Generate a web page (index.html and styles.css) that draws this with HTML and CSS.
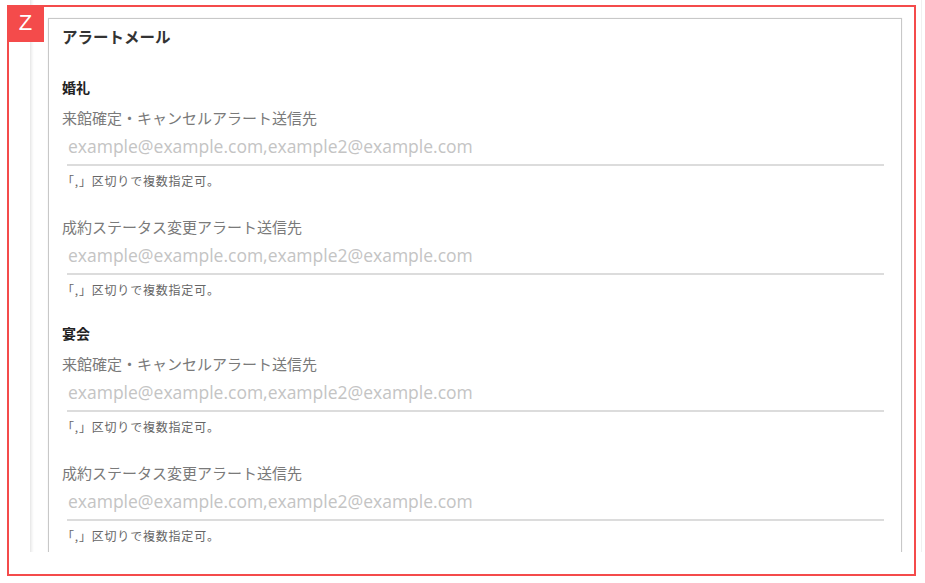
FILE: index.html
```html
<!DOCTYPE html>
<html lang="ja">
<head>
    <meta charset="UTF-8">
    <meta name="viewport" content="width=device-width, initial-scale=1.0">
    <title>アラートメール</title>
    <link rel="stylesheet" href="styles.css">
</head>
<body>
    <div class="frame">
        <div class="panel">
            <div class="card">
                <h2 class="card-title">アラートメール</h2>

                <div class="section">
                    <h3 class="section-title">婚礼</h3>
                    <div class="field">
                        <label for="weddingVisit">来館確定・キャンセルアラート送信先</label>
                        <input type="text" id="weddingVisit" placeholder="example@example.com,example2@example.com" />
                        <small class="hint">「,」区切りで複数指定可。</small>
                    </div>
                    <div class="field">
                        <label for="weddingStatus">成約ステータス変更アラート送信先</label>
                        <input type="text" id="weddingStatus" placeholder="example@example.com,example2@example.com" />
                        <small class="hint">「,」区切りで複数指定可。</small>
                    </div>
                </div>

                <div class="section">
                    <h3 class="section-title">宴会</h3>
                    <div class="field">
                        <label for="banquetVisit">来館確定・キャンセルアラート送信先</label>
                        <input type="text" id="banquetVisit" placeholder="example@example.com,example2@example.com" />
                        <small class="hint">「,」区切りで複数指定可。</small>
                    </div>
                    <div class="field">
                        <label for="banquetStatus">成約ステータス変更アラート送信先</label>
                        <input type="text" id="banquetStatus" placeholder="example@example.com,example2@example.com" />
                        <small class="hint">「,」区切りで複数指定可。</small>
                    </div>
                </div>
            </div>
        </div>
    </div>

    <div class="highlight"></div>
    <div class="badge">Z</div>
</body>
</html>
```

FILE: styles.css
```css
body {
  margin: 0;
  background: #fff;
  font-family: "Noto Sans CJK JP", "Noto Sans", sans-serif;
}

.frame {
  height: 552px;
  overflow: hidden;
}

.panel {
  margin-left: 30px;
  width: 892px;
  height: 100%;
  box-sizing: border-box;
  padding: 18px 19px 0 18px;
  background: linear-gradient(to right, #e6e6e6, #f6f6f6 2px, #fff 4px);
  border-right: 1px solid #f0f0f0;
}

.card {
  border: 1px solid #c8c8c8;
  box-shadow: 0 0 1px rgba(0, 0, 0, 0.12);
  padding: 7px 17px 40px 13px;
  background: #fff;
}

.card-title {
  margin: 0 0 31px;
  font-size: 15.5px;
  line-height: 20px;
  font-weight: bold;
  color: #333;
}

.section + .section {
  margin-top: 25px;
}

.section-title {
  margin: 0 0 11px;
  font-size: 14px;
  line-height: 20px;
  font-weight: bold;
  color: #222;
}

.field {
  display: flex;
  flex-direction: column;
}

.field + .field {
  margin-top: 28px;
}

label {
  font-size: 15px;
  line-height: 20px;
  color: #7a7a7a;
}

input {
  margin: 5px 0 0 5px;
  height: 26px;
  padding: 0 0 5px 1px;
  border: none;
  border-bottom: 2px solid #dcdcdc;
  font-family: "Open Sans", sans-serif;
  font-size: 17.5px;
  color: #444;
  outline: none;
}

input::placeholder {
  color: #c4c4c4;
}

.hint {
  margin-top: 7px;
  font-size: 12px;
  line-height: 16px;
  letter-spacing: 0.8px;
  color: #666;
}

.highlight {
  position: absolute;
  left: 7px;
  top: 5px;
  width: 909px;
  height: 571px;
  box-sizing: border-box;
  border: 2px solid #f44b4b;
}

.badge {
  position: absolute;
  left: 7px;
  top: 5px;
  width: 37px;
  height: 37px;
  background: #f44b4b;
  color: #fff;
  font-family: "Liberation Sans", Arial, sans-serif;
  font-size: 22px;
  line-height: 35px;
  text-align: center;
}
```
